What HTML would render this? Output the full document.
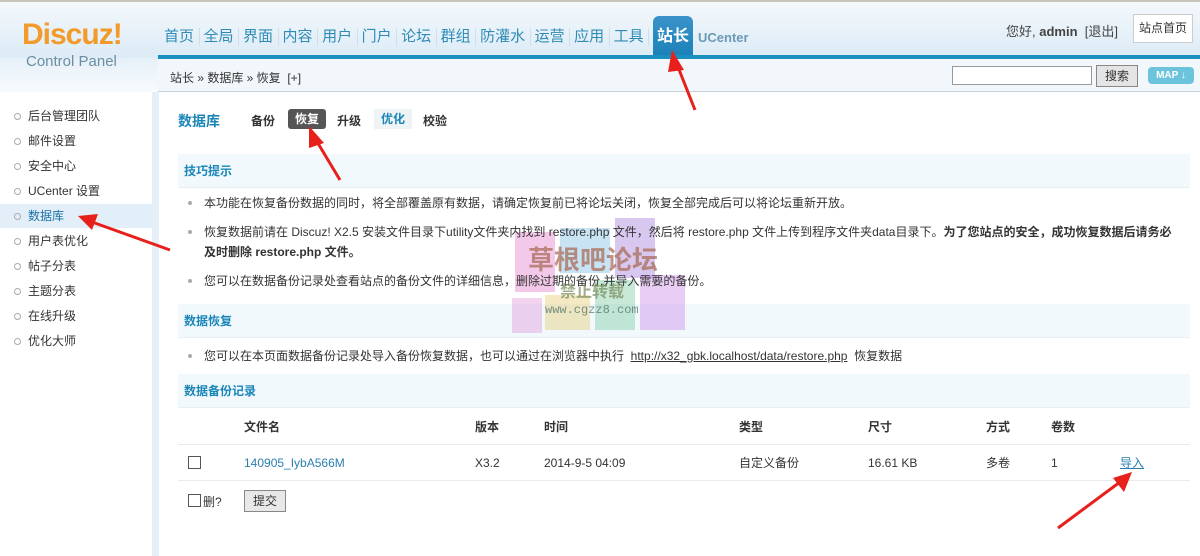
<!DOCTYPE html>
<html><head><meta charset="utf-8"><style>
*{margin:0;padding:0;box-sizing:border-box}
body{width:1200px;height:556px;overflow:hidden;background:#fff;font-family:"Liberation Sans","Noto Sans CJK SC",sans-serif;font-size:12px;color:#333;position:relative}
.abs{position:absolute}
#hd{left:0;top:0;width:1200px;height:58px;background:linear-gradient(#f4f8fc,#dcebf6);border-top:2px solid #c8c4b8}
#hd2{left:0;top:58px;width:158px;height:34px;background:linear-gradient(#e6f0f8,#f8fbfd)}
.logo{left:22px;top:18px;font:bold 30px "Liberation Sans",sans-serif;color:#f39a2c;letter-spacing:-1px}
.cp{left:26px;top:53px;font-size:15px;color:#6b8ea3}
.nav{top:28px;left:160px;display:flex;font-size:15px;color:#2f8bb5}
.nav span{padding:0 4.5px 0 4px;border-right:1px solid #cfe0ea;line-height:18px}
.tab{left:653px;top:16px;width:40px;height:42px;background:linear-gradient(#3a93c9,#1a80b8);border-radius:6px 6px 0 0;color:#fff;font-size:16px;font-weight:bold;text-align:center;line-height:42px}
.uc{left:698px;top:30px;font-size:13px;font-weight:bold;color:#6b9ab5}
#bl{left:158px;top:55px;width:1042px;height:4px;background:#1a90c0}
#bc{left:158px;top:59px;width:1042px;height:33px;background:#f2f7fb;border-bottom:1px solid #c3d2dc}
#sb{left:0;top:92px;width:152px;height:464px;background:#fff}
#sbb{left:152px;top:92px;width:7px;height:464px;background:#e4eff7}
.sbi{left:0;width:152px;height:24px;line-height:24px;padding-left:28px;font-size:12px;color:#333}
.sbi:before{content:"";position:absolute;left:14px;top:9px;width:5px;height:5px;border:1px solid #aaa;border-radius:50%}
.sh{left:178px;width:1012px;height:34px;background:#f2f9fd;border-bottom:1px solid #e8eef2;color:#1a86b8;font-weight:bold;font-size:12px;line-height:34px;padding-left:6px}
.li{left:188px;font-size:12px;color:#333;padding-left:16px;line-height:20px}
.li:before{content:"";position:absolute;left:0;top:8px;width:4px;height:4px;background:#aaa;border-radius:50%}
.tr{left:178px;width:1012px;height:36px;border-bottom:1px solid #e6ebee}
.td{position:absolute;top:9px;line-height:18px;height:18px}
a{color:#2a7fb0;text-decoration:none}
.wm{position:absolute;opacity:.35}
</style></head><body>
<div id="hd" class="abs"></div><div id="hd2" class="abs"></div>
<div class="abs logo">Discuz!</div>
<div class="abs cp" style="top:53px">Control Panel</div>
<div class="abs nav"><span>首页</span><span>全局</span><span>界面</span><span>内容</span><span>用户</span><span>门户</span><span>论坛</span><span>群组</span><span>防灌水</span><span>运营</span><span>应用</span><span>工具</span></div>
<div class="abs tab">站长</div>
<div class="abs uc">UCenter</div>
<div class="abs" style="left:1006px;top:21px;font-size:13px;color:#444">您好, <b>admin</b> &nbsp;[退出]</div>
<div class="abs" style="left:1133px;top:14px;width:60px;height:29px;border:1px solid #ccc;background:#fff;text-align:center;line-height:27px;font-size:12px">站点首页</div>
<div id="bl" class="abs"></div>
<div id="bc" class="abs"><span style="position:absolute;left:12px;top:10px;font-size:12px;color:#333">站长 » 数据库 » 恢复 &nbsp;[+]</span>
<div style="position:absolute;left:794px;top:7px;width:140px;height:19px;border:1px solid #999;background:#fff"></div>
<div style="position:absolute;left:938px;top:6px;width:42px;height:22px;border:1px solid #888;background:#e4e4e4;text-align:center;line-height:20px">搜索</div>
<div style="position:absolute;left:990px;top:8px;width:46px;height:17px;background:#6cc3dc;border-radius:4px;color:#fff;font-size:10px;font-weight:bold;text-align:center;line-height:17px">MAP ↓</div></div>
<div id="sb" class="abs"></div><div id="sbb" class="abs"></div>
<div class="abs sbi" style="top:104px">后台管理团队</div>
<div class="abs sbi" style="top:129px">邮件设置</div>
<div class="abs sbi" style="top:154px">安全中心</div>
<div class="abs sbi" style="top:179px">UCenter 设置</div>
<div class="abs sbi" style="top:204px;background:#e3eff8;color:#1a70a8">数据库</div>
<div class="abs sbi" style="top:229px">用户表优化</div>
<div class="abs sbi" style="top:254px">帖子分表</div>
<div class="abs sbi" style="top:279px">主题分表</div>
<div class="abs sbi" style="top:304px">在线升级</div>
<div class="abs sbi" style="top:329px">优化大师</div>
<div class="abs" style="left:178px;top:111px;font-size:14px;font-weight:bold;color:#1a86b8">数据库</div>
<div class="abs" style="left:251px;top:112px;font-weight:bold">备份</div>
<div class="abs" style="left:288px;top:109px;width:38px;height:20px;background:#555;color:#fff;border-radius:3px;font-weight:bold;text-align:center;line-height:20px">恢复</div>
<div class="abs" style="left:337px;top:112px;font-weight:bold">升级</div>
<div class="abs" style="left:374px;top:109px;width:38px;height:20px;background:#eef3f6;color:#1a86b8;font-weight:bold;text-align:center;line-height:20px">优化</div>
<div class="abs" style="left:423px;top:112px;font-weight:bold">校验</div>
<div class="abs sh" style="top:154px">技巧提示</div>
<div class="abs sh" style="top:304px">数据恢复</div>
<div class="wm" style="left:515px;top:232px;width:40px;height:60px;background:#e060c0"></div>
<div class="wm" style="left:560px;top:228px;width:50px;height:45px;background:#60b0e0"></div>
<div class="wm" style="left:615px;top:218px;width:40px;height:60px;background:#9060d0"></div>
<div class="wm" style="left:640px;top:275px;width:45px;height:55px;background:#c070e0"></div>
<div class="wm" style="left:595px;top:280px;width:40px;height:50px;background:#60c090"></div>
<div class="wm" style="left:545px;top:295px;width:45px;height:35px;background:#e0c050"></div>
<div class="wm" style="left:512px;top:298px;width:30px;height:35px;background:#e080d0"></div>
<div class="abs li" style="top:193px">本功能在恢复备份数据的同时，将全部覆盖原有数据，请确定恢复前已将论坛关闭，恢复全部完成后可以将论坛重新开放。</div>
<div class="abs li" style="top:222px;width:992px">恢复数据前请在 Discuz! X2.5 安装文件目录下utility文件夹内找到 restore.php 文件，然后将 restore.php 文件上传到程序文件夹data目录下。<b>为了您站点的安全，成功恢复数据后请务必及时删除 restore.php 文件。</b></div>
<div class="abs li" style="top:271px">您可以在数据备份记录处查看站点的备份文件的详细信息，删除过期的备份,并导入需要的备份。</div>
<div class="abs" style="left:528px;top:240px;font-size:26px;font-weight:bold;color:rgba(170,110,90,.75)">草根吧论坛</div>
<div class="abs" style="left:560px;top:278px;font-size:16px;font-weight:bold;color:rgba(120,140,90,.7)">禁止转载</div>
<div class="abs" style="left:545px;top:303px;font-size:12px;font-family:'Liberation Mono',monospace;color:rgba(90,120,110,.8)">www.cgzz8.com</div>
<div class="abs li" style="top:346px">您可以在本页面数据备份记录处导入备份恢复数据，也可以通过在浏览器中执行 &nbsp;<u>http://x32_gbk.localhost/data/restore.php</u>&nbsp; 恢复数据</div>
<div class="abs sh" style="top:374px">数据备份记录</div>
<div class="abs tr" style="top:409px"><span class="td" style="left:66px;font-weight:bold">文件名</span><span class="td" style="left:297px;font-weight:bold">版本</span><span class="td" style="left:366px;font-weight:bold">时间</span><span class="td" style="left:561px;font-weight:bold">类型</span><span class="td" style="left:690px;font-weight:bold">尺寸</span><span class="td" style="left:808px;font-weight:bold">方式</span><span class="td" style="left:873px;font-weight:bold">卷数</span></div>
<div class="abs tr" style="top:445px"><span class="td" style="left:10px;top:11px;width:13px;height:13px;border:1px solid #555"></span><span class="td" style="left:66px"><a>140905_IybA566M</a></span><span class="td" style="left:297px">X3.2</span><span class="td" style="left:366px">2014-9-5 04:09</span><span class="td" style="left:561px">自定义备份</span><span class="td" style="left:690px">16.61 KB</span><span class="td" style="left:808px">多卷</span><span class="td" style="left:873px">1</span><span class="td" style="left:942px"><a style="text-decoration:underline">导入</a></span></div>
<div class="abs" style="left:188px;top:494px;width:13px;height:13px;border:1px solid #555"></div>
<div class="abs" style="left:203px;top:493px">删?</div>
<div class="abs" style="left:244px;top:490px;width:42px;height:22px;border:1px solid #888;background:#e8e8e8;text-align:center;line-height:20px">提交</div>
<svg class="abs" style="left:0;top:0" width="1200" height="556">
<g fill="#e8201c" stroke="#e8201c" stroke-width="3">
<line x1="695" y1="110" x2="676" y2="62"/><polygon points="672,50 684,70 668,72" stroke="none"/>
<line x1="340" y1="180" x2="316" y2="140"/><polygon points="309,126 324,143 309,148" stroke="none"/>
<line x1="170" y1="250" x2="92" y2="222"/><polygon points="78,216 98,214 92,230" stroke="none"/>
<line x1="1058" y1="528" x2="1120" y2="482"/><polygon points="1132,472 1124,492 1113,478" stroke="none"/>
</g></svg>
</body></html>
